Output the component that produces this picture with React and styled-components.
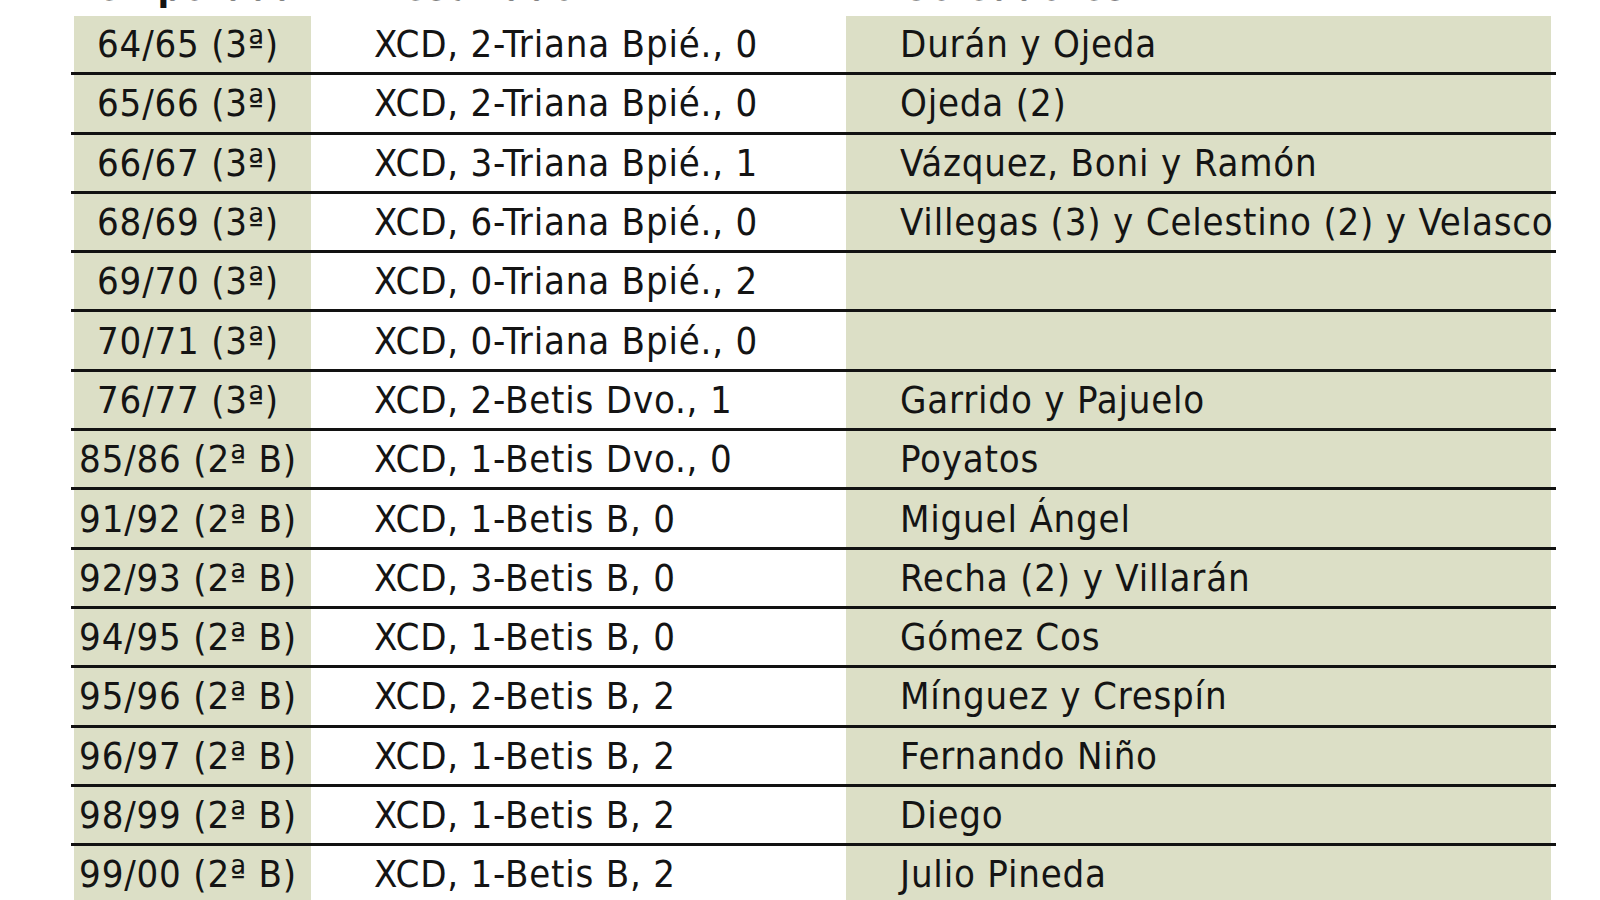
import React from 'react'
import styled, { createGlobalStyle } from 'styled-components'

const GlobalStyle = createGlobalStyle`
  html, body {
    margin: 0;
    padding: 0;
    background: #ffffff;
    overflow: hidden;
  }
  body {
    font-family: "DejaVu Sans Condensed", "DejaVu Sans", sans-serif;
    font-stretch: condensed;
    color: #141414;
  }
`

const Page = styled.div`
  width: 1600px;
  height: 900px;
  overflow: hidden;
  padding-left: 71px;
  box-sizing: border-box;
`

const Table = styled.div`
  width: 1485px;
  display: flex;
  flex-direction: column;
`

const Grid = styled.div`
  display: grid;
  grid-template-columns: 237px 535px 705px;
  padding: 0 5px 0 3px;
  box-sizing: border-box;
`

const Header = styled(Grid)`
  height: 49px;
  margin-top: -33px;
  font-size: 38px;
  font-weight: bold;
  line-height: 40px;
  letter-spacing: 0.8px;
  white-space: nowrap;
`

const HeadCell = styled.div`
  padding-left: ${p => p.$indent}px;
`

const Row = styled(Grid)`
  border-bottom: 3px solid #121212;
`

const Cell = styled.div`
  height: 56.3px;
  display: flex;
  align-items: center;
  font-size: 38px;
  letter-spacing: 0.8px;
  white-space: nowrap;
  background: ${p => (p.$shaded ? '#dcdfc6' : '#ffffff')};
  justify-content: ${p => (p.$center ? 'center' : 'flex-start')};
  padding-left: ${p => p.$indent || 0}px;
  padding-right: ${p => p.$right || 0}px;
  box-sizing: border-box;
`

const rows = [
  ['64/65 (3ª)', 'XCD, 2-Triana Bpié., 0', 'Durán y Ojeda'],
  ['65/66 (3ª)', 'XCD, 2-Triana Bpié., 0', 'Ojeda (2)'],
  ['66/67 (3ª)', 'XCD, 3-Triana Bpié., 1', 'Vázquez, Boni y Ramón'],
  ['68/69 (3ª)', 'XCD, 6-Triana Bpié., 0', 'Villegas (3) y Celestino (2) y Velasco'],
  ['69/70 (3ª)', 'XCD, 0-Triana Bpié., 2', ''],
  ['70/71 (3ª)', 'XCD, 0-Triana Bpié., 0', ''],
  ['76/77 (3ª)', 'XCD, 2-Betis Dvo., 1', 'Garrido y Pajuelo'],
  ['85/86 (2ª B)', 'XCD, 1-Betis Dvo., 0', 'Poyatos'],
  ['91/92 (2ª B)', 'XCD, 1-Betis B, 0', 'Miguel Ángel'],
  ['92/93 (2ª B)', 'XCD, 3-Betis B, 0', 'Recha (2) y Villarán'],
  ['94/95 (2ª B)', 'XCD, 1-Betis B, 0', 'Gómez Cos'],
  ['95/96 (2ª B)', 'XCD, 2-Betis B, 2', 'Mínguez y Crespín'],
  ['96/97 (2ª B)', 'XCD, 1-Betis B, 2', 'Fernando Niño'],
  ['98/99 (2ª B)', 'XCD, 1-Betis B, 2', 'Diego'],
  ['99/00 (2ª B)', 'XCD, 1-Betis B, 2', 'Julio Pineda'],
]

export default function App() {
  return (
    <Page>
      <GlobalStyle />
      <Table>
        <Header>
          <HeadCell $indent={4}>Temporada</HeadCell>
          <HeadCell $indent={65}>Resultado</HeadCell>
          <HeadCell $indent={55}>Goleadores</HeadCell>
        </Header>
        {rows.map(([season, result, scorers]) => (
          <Row key={season}>
            <Cell $shaded $center $right={9}>{season}</Cell>
            <Cell $indent={63}>{result}</Cell>
            <Cell $shaded $indent={54}>{scorers}</Cell>
          </Row>
        ))}
      </Table>
    </Page>
  )
}
